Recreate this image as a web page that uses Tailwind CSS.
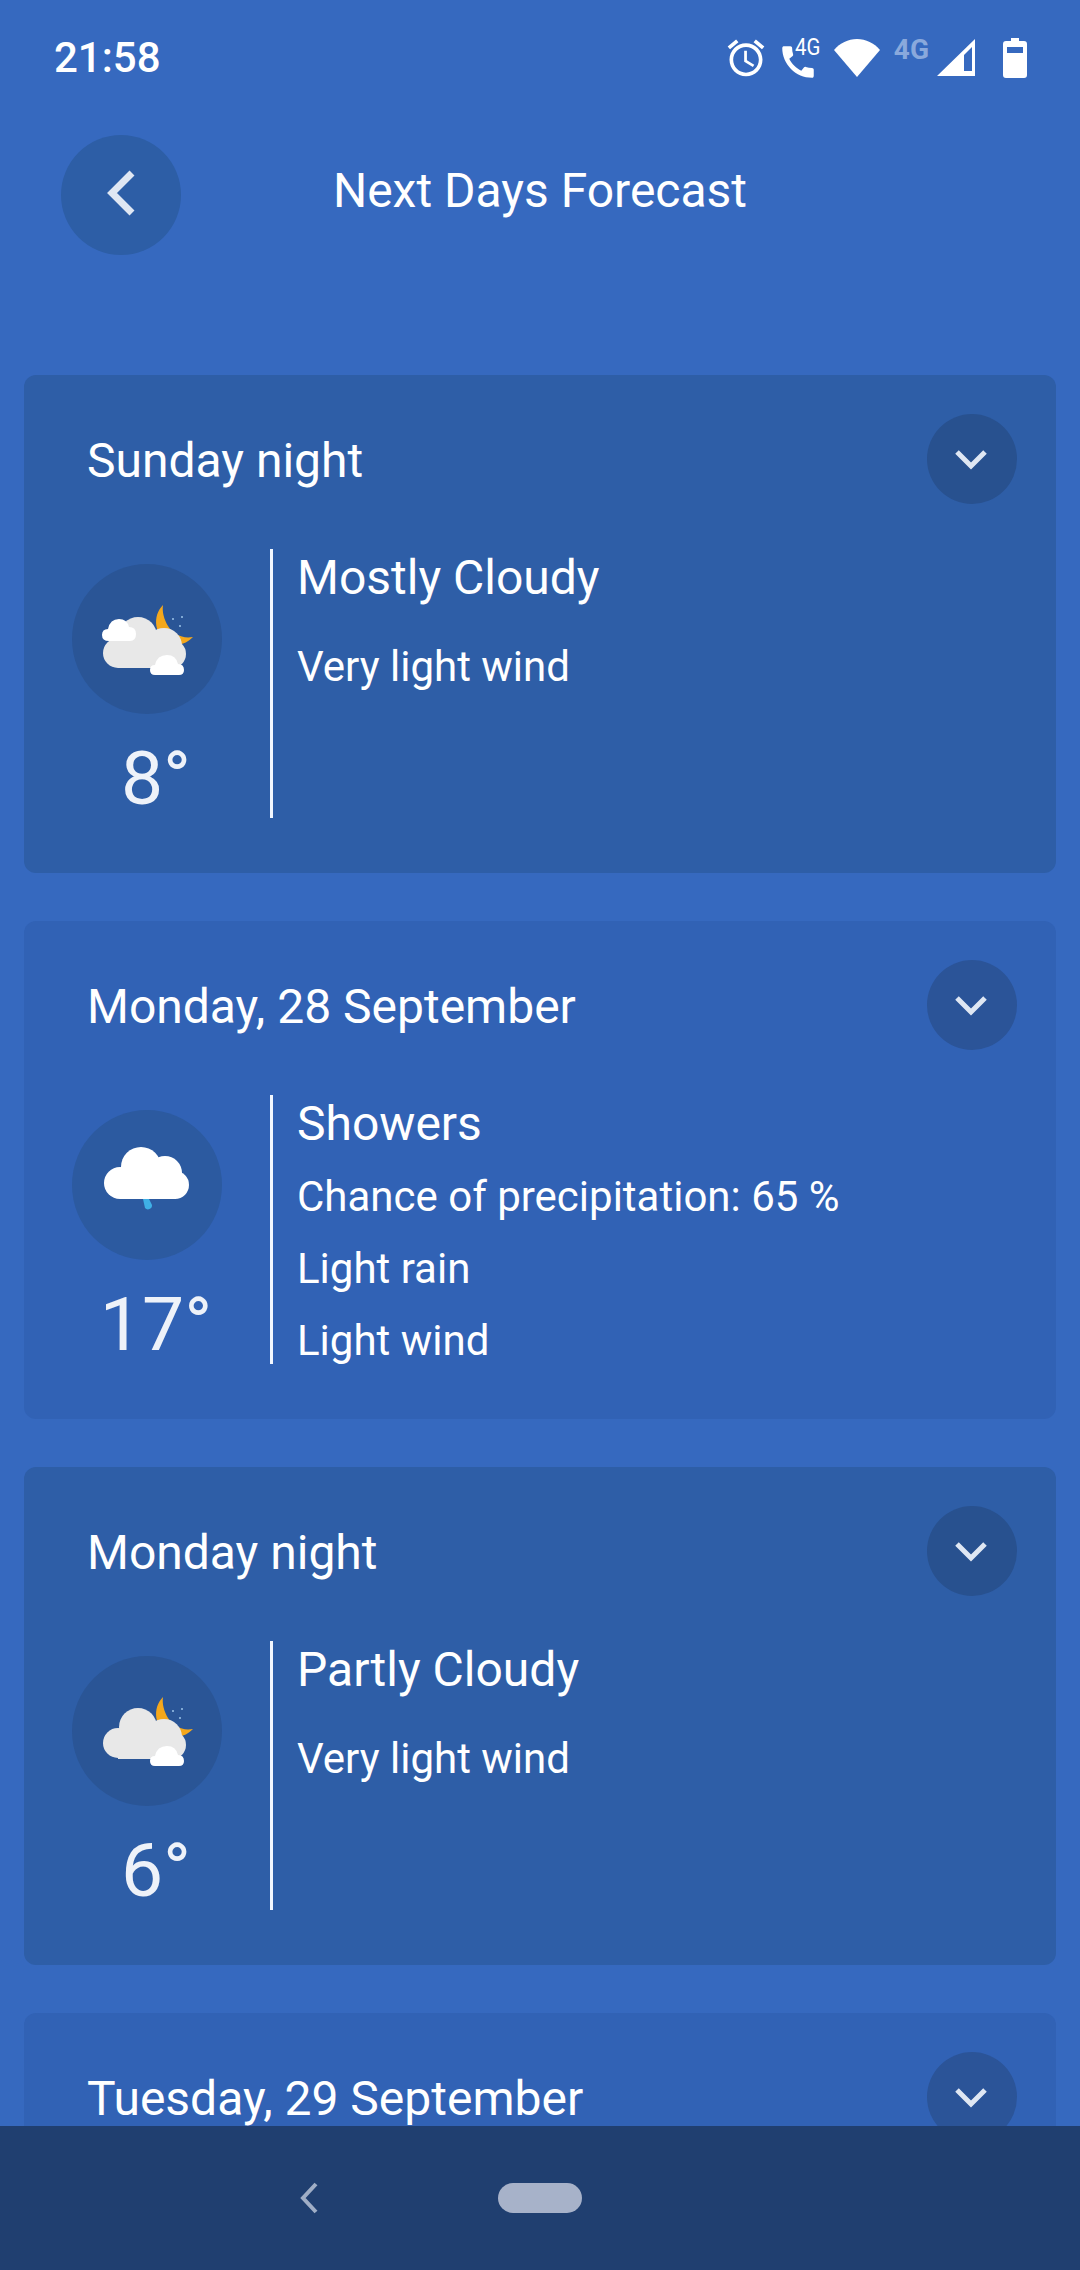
<!DOCTYPE html>
<html lang="en">
<head>
    <meta charset="UTF-8">
    <meta name="viewport" content="width=device-width, initial-scale=1.0">
    <title>Next Days Forecast</title>
    <script src="https://cdn.jsdelivr.net/npm/@tailwindcss/browser@4"></script>
</head>
<body class="bg-[#3669bf]">
    <svg class="hidden" xmlns="http://www.w3.org/2000/svg">
        <symbol id="chevron-down" viewBox="0 0 38 25">
            <path d="M5 4l14 14L33 4" fill="none" stroke="#dfe7f3" stroke-width="5"></path>
        </symbol>
        <symbol id="moon" viewBox="0 0 150 150">
            <path d="M91 41C80 52 82 72 98 79C107 83 115 79 121 73C110 75 101 70 96 62C92 55 90 48 91 41Z" fill="#f5a81c"></path>
            <circle cx="101" cy="55" r="1" fill="#9dc4e8"></circle>
            <circle cx="110" cy="53" r="1" fill="#9dc4e8"></circle>
            <circle cx="108" cy="62" r="1" fill="#9dc4e8"></circle>
        </symbol>
    </svg>

    <div class="flex flex-col h-[2270px] w-[1080px] overflow-hidden font-['Roboto',sans-serif] text-white">
        <!-- status bar -->
        <div class="flex items-center h-[112px] shrink-0 pl-[54px] pt-[3px]">
            <span class="text-[42px] font-medium leading-none">21:58</span>
            <div class="flex items-center ml-auto mr-[53px]">
                <svg class="w-[44px] h-[44px]" viewBox="0 0 24 24" fill="#fff"><path d="M22 5.720l-4.600-3.860-1.290 1.530 4.600 3.860L22 5.720zM7.880 3.390L6.600 1.860 2 5.710l1.290 1.530 4.590-3.850zM12.500 8H11v6l4.750 2.850.75-1.230-4-2.370V8zM12 4c-4.970 0-9 4.030-9 9s4.030 9 9 9 9-4.030 9-9-4.030-9-9-9zm0 16c-3.870 0-7-3.130-7-7s3.130-7 7-7 7 3.130 7 7-3.130 7-7 7z"></path></svg>
                <div class="relative w-[47px] h-[44px] ml-[12px]">
                    <svg class="w-[42px] h-[42px] absolute left-[-3px] top-[5px]" viewBox="0 0 24 24" fill="#fff"><path d="M20.010 15.380c-1.230 0-2.420-.2-3.530-.56-.35-.12-.74-.03-1.010.24l-1.570 1.970c-2.830-1.350-5.480-3.900-6.890-6.830l1.950-1.660c.27-.28.35-.67.24-1.020-.37-1.110-.56-2.300-.56-3.530 0-.54-.45-.99-.99-.99H4.190C3.650 3 3 3.240 3 3.990 3 13.280 10.730 21 20.010 21c.71 0 .99-.63.99-1.180v-3.450c0-.54-.45-.99-.99-.99z"></path></svg>
                    <span class="absolute left-[15px] top-[-1px] text-[24px] leading-[24px] scale-x-[.85] origin-left">4G</span>
                </div>
                <svg class="w-[46px] h-[38px] ml-[7px]" viewBox="0 0 46 38" fill="#fff"><path d="M0 11C6 4 14 0 23 0s17 4 23 11L23 38Z"></path></svg>
                <span class="text-[28px] font-bold leading-none text-[#8aa9dc] ml-[14px] mb-[15px]">4G</span>
                <svg class="w-[38px] h-[37px] ml-[8px]" viewBox="0 0 38 37" fill="#fff"><path d="M38 0V37H0ZM27 16 L27 32 L35 32 L35 8Z" fill-rule="evenodd"></path></svg>
                <svg class="w-[24px] h-[40px] ml-[28px]" viewBox="0 0 24 40" fill="#fff"><path d="M8 0h8v3h5q3 0 3 3v31q0 3-3 3H3q-3 0-3-3V6q0-3 3-3h5ZM4 9v6h16V9Z" fill-rule="evenodd"></path></svg>
            </div>
        </div>

        <!-- header -->
        <div class="relative flex items-center h-[263px] shrink-0 pl-[61px] pt-[23px] pb-[120px]">
            <button class="flex items-center justify-center w-[120px] h-[120px] rounded-full bg-[#2d5ea6]">
                <svg class="w-[30px] h-[46px] mb-[4px]" viewBox="0 0 30 46"><path d="M26 3L6 23l20 20" fill="none" stroke="#dfe7f3" stroke-width="7"></path></svg>
            </button>
            <h1 class="absolute left-0 right-0 top-[56px] text-center text-[48px] leading-[46px] font-normal">Next Days Forecast</h1>
        </div>

        <!-- forecast list -->
        <div class="flex-1 overflow-hidden px-[24px] flex flex-col gap-[48px]">

            <div class="shrink-0 h-[498px] rounded-[12px] bg-[#2e5ea7] pt-[39px]">
                <div class="flex items-center justify-between h-[90px] pl-[63px] pr-[39px]">
                    <span class="text-[48px] leading-none mt-[4px]">Sunday night</span>
                    <button class="flex items-center justify-center w-[90px] h-[90px] rounded-full bg-[#28518f]">
                        <svg class="w-[38px] h-[25px] mt-[3px] mr-[2px]"><use href="#chevron-down"></use></svg>
                    </button>
                </div>
                <div class="flex mt-[45px] h-[269px]">
                    <div class="flex flex-col w-[168px] ml-[48px] items-center pt-[15px]">
                        <div class="self-start w-[150px] h-[150px] rounded-full bg-[#2a5596]">
                            <svg class="w-[150px] h-[150px]" viewBox="0 0 150 150">
                                <use href="#moon"></use>
                                <circle cx="66" cy="72" r="19" fill="#e8e8e8"></circle>
                                <circle cx="92" cy="82" r="18" fill="#e8e8e8"></circle>
                                <circle cx="46" cy="89" r="15" fill="#e8e8e8"></circle>
                                <circle cx="100" cy="90" r="14" fill="#e8e8e8"></circle>
                                <rect x="46" y="80" width="54" height="24" fill="#e8e8e8"></rect>
                                <path d="M37 77q-7 0-7-6q0-6 6-6q2-10 11-10q8 0 10 8q7 0 7 7q0 7-6 7Z" fill="#fff"></path>
                                <path d="M83 111q-5 0-5-5q0-5 5-5q2-10 12-10q9 0 11 9q6 0 6 6q0 5-5 5Z" fill="#fff"></path>
                            </svg>
                        </div>
                        <span class="text-[75px] leading-none mt-[27px] text-[#eef2f9]">8°</span>
                    </div>
                    <div class="w-[3px] bg-[#f2f7ff] ml-[30px]"></div>
                    <div class="pl-[24px]">
                        <p class="text-[48px] h-[58px] leading-[58px]">Mostly Cloudy</p>
                        <p class="text-[42px] h-[72px] leading-[72px] mt-[24px]">Very light wind</p>
                    </div>
                </div>
            </div>

            <div class="shrink-0 h-[498px] rounded-[12px] bg-[#3162b5] pt-[39px]">
                <div class="flex items-center justify-between h-[90px] pl-[63px] pr-[39px]">
                    <span class="text-[48px] leading-none mt-[4px]">Monday, 28 September</span>
                    <button class="flex items-center justify-center w-[90px] h-[90px] rounded-full bg-[#2b5498]">
                        <svg class="w-[38px] h-[25px] mt-[3px] mr-[2px]"><use href="#chevron-down"></use></svg>
                    </button>
                </div>
                <div class="flex mt-[45px] h-[269px]">
                    <div class="flex flex-col w-[168px] ml-[48px] items-center pt-[15px]">
                        <div class="self-start w-[150px] h-[150px] rounded-full bg-[#2c5aa0]">
                            <svg class="w-[150px] h-[150px]" viewBox="0 0 150 150">
                                <circle cx="69" cy="57" r="20" fill="#fff"></circle>
                                <circle cx="93" cy="63" r="17" fill="#fff"></circle>
                                <circle cx="48" cy="73" r="16" fill="#fff"></circle>
                                <circle cx="103" cy="75" r="14" fill="#fff"></circle>
                                <rect x="48" y="62" width="56" height="27" fill="#fff"></rect>
                                <path d="M71 89h6l3 6a4 4 0 0 1-7 3Z" fill="#3fb0e6"></path>
                            </svg>
                        </div>
                        <span class="text-[75px] leading-none mt-[27px] text-[#eef2f9]">17°</span>
                    </div>
                    <div class="w-[3px] bg-[#f2f7ff] ml-[30px]"></div>
                    <div class="pl-[24px]">
                        <p class="text-[48px] h-[58px] leading-[58px]">Showers</p>
                        <p class="text-[42px] h-[72px] leading-[72px] mt-[8px]">Chance of precipitation: 65 %</p>
                        <p class="text-[42px] h-[72px] leading-[72px]">Light rain</p>
                        <p class="text-[42px] h-[72px] leading-[72px]">Light wind</p>
                    </div>
                </div>
            </div>

            <div class="shrink-0 h-[498px] rounded-[12px] bg-[#2e5ea7] pt-[39px]">
                <div class="flex items-center justify-between h-[90px] pl-[63px] pr-[39px]">
                    <span class="text-[48px] leading-none mt-[4px]">Monday night</span>
                    <button class="flex items-center justify-center w-[90px] h-[90px] rounded-full bg-[#28518f]">
                        <svg class="w-[38px] h-[25px] mt-[3px] mr-[2px]"><use href="#chevron-down"></use></svg>
                    </button>
                </div>
                <div class="flex mt-[45px] h-[269px]">
                    <div class="flex flex-col w-[168px] ml-[48px] items-center pt-[15px]">
                        <div class="self-start w-[150px] h-[150px] rounded-full bg-[#2a5596]">
                            <svg class="w-[150px] h-[150px]" viewBox="0 0 150 150">
                                <use href="#moon"></use>
                                <circle cx="66" cy="71" r="19" fill="#e8e8e8"></circle>
                                <circle cx="92" cy="81" r="18" fill="#e8e8e8"></circle>
                                <circle cx="46" cy="87" r="15" fill="#e8e8e8"></circle>
                                <circle cx="100" cy="89" r="14" fill="#e8e8e8"></circle>
                                <rect x="46" y="75" width="54" height="28" fill="#e8e8e8"></rect>
                                <path d="M83 110q-5 0-5-5q0-5 5-5q2-10 12-10q9 0 11 9q6 0 6 6q0 5-5 5Z" fill="#fff"></path>
                            </svg>
                        </div>
                        <span class="text-[75px] leading-none mt-[27px] text-[#eef2f9]">6°</span>
                    </div>
                    <div class="w-[3px] bg-[#f2f7ff] ml-[30px]"></div>
                    <div class="pl-[24px]">
                        <p class="text-[48px] h-[58px] leading-[58px]">Partly Cloudy</p>
                        <p class="text-[42px] h-[72px] leading-[72px] mt-[24px]">Very light wind</p>
                    </div>
                </div>
            </div>

            <div class="shrink-0 h-[498px] rounded-[12px] bg-[#3162b5] pt-[39px]">
                <div class="flex items-center justify-between h-[90px] pl-[63px] pr-[39px]">
                    <span class="text-[48px] leading-none mt-[4px]">Tuesday, 29 September</span>
                    <button class="flex items-center justify-center w-[90px] h-[90px] rounded-full bg-[#2b5498]">
                        <svg class="w-[38px] h-[25px] mt-[3px] mr-[2px]"><use href="#chevron-down"></use></svg>
                    </button>
                </div>
            </div>
        </div>

        <!-- nav bar -->
        <div class="flex items-center shrink-0 h-[144px] bg-[#203f70] pl-[299px]">
            <svg class="w-[20px] h-[32px] mb-[1px]" viewBox="0 0 20 32"><path d="M17 2L4 16l13 14" fill="none" stroke="#a0aec6" stroke-width="4"></path></svg>
            <div class="w-[84px] h-[30px] rounded-full bg-[#a7b2c9] ml-[179px]"></div>
        </div>
    </div>
</body>
</html>
